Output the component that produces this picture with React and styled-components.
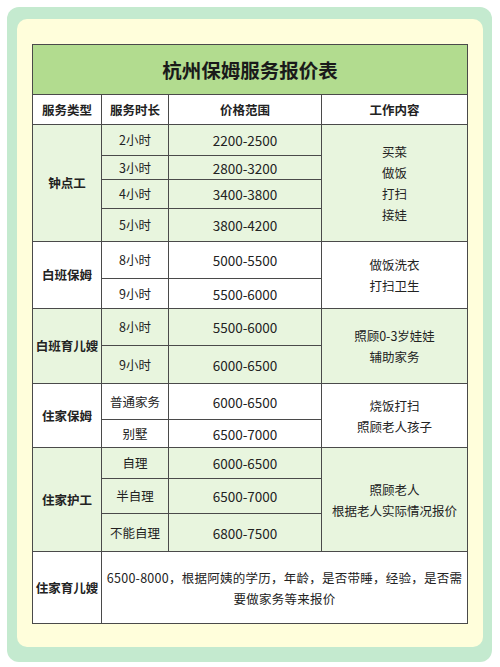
import React from "react";
import styled, { createGlobalStyle } from "styled-components";

const GlobalStyle = createGlobalStyle`
    body {
        margin: 0;
        background: #ffffff;
        font-family: "Noto Sans CJK SC", "Noto Sans", sans-serif;
        color: #222222;
    }
`;

const groups = [
    {
        name: "钟点工",
        tone: "green",
        work: ["买菜", "做饭", "打扫", "接娃"],
        rows: [
            ["2小时", "2200-2500", 31],
            ["3小时", "2800-3200", 24],
            ["4小时", "3400-3800", 29],
            ["5小时", "3800-4200", 33],
        ],
    },
    {
        name: "白班保姆",
        tone: "white",
        work: ["做饭洗衣", "打扫卫生"],
        rows: [
            ["8小时", "5000-5500", 37],
            ["9小时", "5500-6000", 30],
        ],
    },
    {
        name: "白班育儿嫂",
        tone: "green",
        work: ["照顾0-3岁娃娃", "辅助家务"],
        rows: [
            ["8小时", "5500-6000", 37],
            ["9小时", "6000-6500", 38],
        ],
    },
    {
        name: "住家保姆",
        tone: "white",
        work: ["烧饭打扫", "照顾老人孩子"],
        rows: [
            ["普通家务", "6000-6500", 36],
            ["别墅", "6500-7000", 28],
        ],
    },
    {
        name: "住家护工",
        tone: "green",
        work: ["照顾老人", "根据老人实际情况报价"],
        rows: [
            ["自理", "6000-6500", 31],
            ["半自理", "6500-7000", 35],
            ["不能自理", "6800-7500", 38],
        ],
    },
];

const App = () => {
    return (
        <>
            <GlobalStyle />
            <Frame>
                <Panel>
                    <PriceTable>
                        <colgroup>
                            <col style={{ width: 69 }} />
                            <col style={{ width: 67 }} />
                            <col style={{ width: 153 }} />
                            <col style={{ width: 146 }} />
                        </colgroup>
                        <tbody>
                            <Row $h={50}>
                                <TitleCell colSpan={4}>杭州保姆服务报价表</TitleCell>
                            </Row>
                            <Row $h={30}>
                                <HeadCell>服务类型</HeadCell>
                                <HeadCell>服务时长</HeadCell>
                                <HeadCell>价格范围</HeadCell>
                                <HeadCell>工作内容</HeadCell>
                            </Row>

                            {groups.map((g) =>
                                g.rows.map((r, i) => (
                                    <Row key={g.name + i} $h={r[2]} $tone={g.tone}>
                                        {i === 0 && (
                                            <CategoryCell rowSpan={g.rows.length}>{g.name}</CategoryCell>
                                        )}
                                        <Cell>{r[0]}</Cell>
                                        <PriceCell>{r[1]}</PriceCell>
                                        {i === 0 && (
                                            <WorkCell rowSpan={g.rows.length}>
                                                {g.work.map((w) => (
                                                    <div key={w}>{w}</div>
                                                ))}
                                            </WorkCell>
                                        )}
                                    </Row>
                                ))
                            )}

                            <Row $h={72} $tone="white">
                                <CategoryCell>住家育儿嫂</CategoryCell>
                                <NoteCell colSpan={3}>
                                    6500-8000，根据阿姨的学历，年龄，是否带睡，经验，是否需
                                    <br />
                                    要做家务等来报价
                                </NoteCell>
                            </Row>
                        </tbody>
                    </PriceTable>
                </Panel>
            </Frame>
        </>
    );
};

const Frame = styled.div`
    margin: 7px 0 0 7px;
    width: 485px;
    height: 655px;
    box-sizing: border-box;
    padding: 12px 9px 15px 10px;
    background: #c4eacf;
    border-radius: 12px;
`;

const Panel = styled.div`
    height: 100%;
    box-sizing: border-box;
    padding: 25px 16px 24px 15px;
    background: #fffedb;
    border-radius: 10px;
`;

const PriceTable = styled.table`
    width: 435px;
    table-layout: fixed;
    border-collapse: collapse;
    border: 1.5px solid #3c3c3c;
`;

const Row = styled.tr`
    height: ${(p) => p.$h}px;
    background: ${(p) => (p.$tone === "green" ? "#e8f5de" : "#ffffff")};
`;

const Cell = styled.td`
    border: 1px solid #4a4a4a;
    padding: 0;
    text-align: center;
    vertical-align: middle;
    font-size: 12.5px;
    line-height: 16px;
`;

const PriceCell = styled(Cell)`
    font-size: 13.5px;
`;

const TitleCell = styled(Cell)`
    background: #b2dc8f;
    font-size: 19.5px;
    font-weight: 700;
    color: #1a1a1a;
`;

const HeadCell = styled(Cell)`
    background: #ffffff;
    font-weight: 700;
`;

const CategoryCell = styled(Cell)`
    font-weight: 700;
    white-space: nowrap;
`;

const WorkCell = styled(Cell)`
    line-height: 21px;
`;

const NoteCell = styled(Cell)`
    line-height: 21px;
    white-space: nowrap;
    letter-spacing: 0.25px;
`;

export default App;
